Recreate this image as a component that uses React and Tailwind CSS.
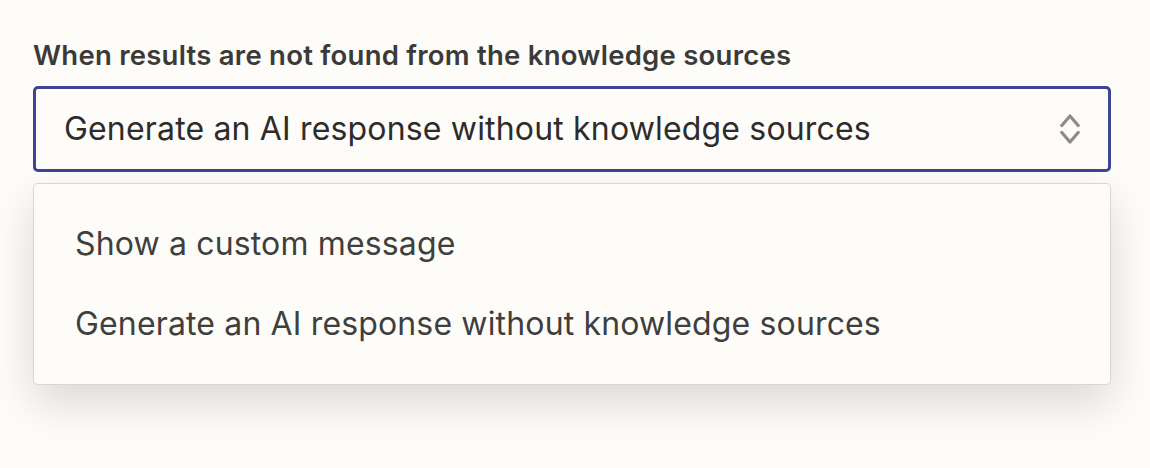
export default function App() {
  const options = [
    'Show a custom message',
    'Generate an AI response without knowledge sources',
  ];

  return (
    <div
      className="w-[1150px] h-[468px] bg-[#fdfcf9] overflow-hidden"
      style={{ fontFamily: 'Inter, "Noto Sans", sans-serif' }}
    >
      <div className="pl-[33px] pt-[38px] w-[1111px]">
        {/* Label */}
        <div className="text-[27.5px] leading-[34px] font-semibold text-[#3b3a39] tracking-[0.25px]">
          When results are not found from the knowledge sources
        </div>

        {/* Select */}
        <div className="mt-[14px] h-[86px] border-[3px] border-[#3d4594] rounded-[5px] bg-[#fdfcf9] flex items-center justify-between pl-[28px] pr-[28px]">
          <span className="text-[32px] text-[#2d2c2b] tracking-[0.17px]">
            Generate an AI response without knowledge sources
          </span>
          <svg width="20" height="34" viewBox="0 0 20 34" fill="none">
            <path d="M1.8 13.5 L10 4 L18.2 13.5" stroke="#8c8b88" strokeWidth="3.2" strokeLinecap="round" strokeLinejoin="round" />
            <path d="M1.8 20.5 L10 30 L18.2 20.5" stroke="#8c8b88" strokeWidth="3.2" strokeLinecap="round" strokeLinejoin="round" />
          </svg>
        </div>

        {/* Dropdown */}
        <div className="mt-[11px] border border-[#d8d6d2] rounded-[5px] bg-[#fdfcf9] py-[20px] shadow-[0_18px_44px_rgba(0,0,0,0.14)]">
          {options.map((o) => (
            <div key={o} className="h-[80px] flex items-center px-[41px] text-[32px] text-[#403f3e] tracking-[0.15px]">
              {o}
            </div>
          ))}
        </div>
      </div>
    </div>
  );
}
